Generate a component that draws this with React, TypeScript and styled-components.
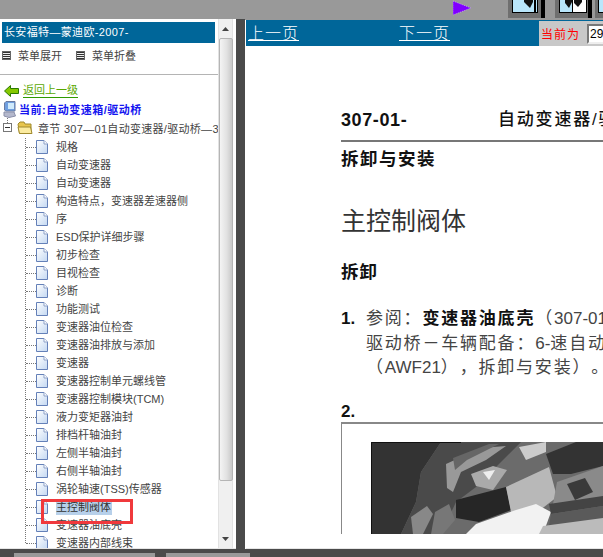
import styled, { createGlobalStyle } from "styled-components";

const GlobalStyle = createGlobalStyle`
    html, body {
        margin: 0;
        padding: 0;
        background: #999;
        overflow: hidden;
    }
    * {
        box-sizing: border-box;
    }
`;

const Page = styled.div`
    position: relative;
    width: 603px;
    height: 557px;
    display: flex;
    flex-direction: column;
    overflow: hidden;
    font-family: "Liberation Sans", "Noto Sans CJK SC", sans-serif;
`;

const TopBar = styled.div`
    height: 19px;
    flex: none;
    display: flex;
    padding-left: 453px;
    background: #999;
    overflow: hidden;
`;

const PlayMark = styled.svg`
    width: 19px;
    height: 16px;
    flex: none;
    margin-right: 36px;
`;

const ToolButton = styled.svg`
    width: 37px;
    height: 18px;
    flex: none;
    margin-right: ${props => props.$gap ?? 3}px;
`;

const Main = styled.div`
    flex: 1;
    min-height: 0;
    display: flex;
    background: #4a4a4a;
`;

const LeftPanel = styled.div`
    width: 236px;
    flex: none;
    display: flex;
    background: #fff;
    border-bottom: 1px solid #e6e6e6;
`;

const Menu = styled.div`
    width: 218px;
    flex: none;
    overflow: hidden;
    padding-top: 3px;
`;

const MenuTitle = styled.div`
    height: 21px;
    margin: 0 3px 0 2px;
    padding-left: 2px;
    background: #006699;
    color: #fff;
    font-size: 11px;
    letter-spacing: 0.35px;
    line-height: 21px;
    white-space: nowrap;
`;

const MenuTools = styled.div`
    height: 32px;
    display: flex;
    align-items: center;
    gap: 7px;
    border-bottom: 1px solid #b4b4b4;
    font-size: 11px;
    color: #444;
    padding: 0 0 7px 2px;
`;

const ToolIcon = styled.span`
    width: 9px;
    height: 9px;
    flex: none;
    border: 1px solid #666;
    background: repeating-linear-gradient(#333 0 1px, #eee 1px 2px);
    margin-left: ${props => props.$offset ?? 0}px;
`;

const BackLink = styled.div`
    display: flex;
    align-items: center;
    height: 19px;
    margin-top: 6px;
    padding-left: 4px;
    gap: 4px;
    font-size: 11px;
    color: #5aa800;
    span {
        border-bottom: 1px solid #2f9b00;
        line-height: 13px;
    }
`;

const Current = styled.div`
    display: flex;
    align-items: center;
    height: 18px;
    padding-left: 3px;
    gap: 3px;
    font-size: 11px;
    font-weight: bold;
    letter-spacing: 0.5px;
    color: #1414f0;
    white-space: nowrap;
`;

const Chapter = styled.div`
    display: flex;
    align-items: center;
    height: 20px;
    padding: 0 0 1px 3px;
    font-size: 11px;
    letter-spacing: 0.3px;
    color: #444;
    white-space: nowrap;
`;

const Collapse = styled.span`
    position: relative;
    width: 9px;
    height: 9px;
    flex: none;
    border: 1px solid #777;
    background: linear-gradient(#333, #333) center / 5px 1px no-repeat #fff;
    margin-right: 5px;
    &::before {
        content: "";
        position: absolute;
        left: 3px;
        top: -6px;
        height: 5px;
        border-left: 1px dotted #777;
    }
`;

const FolderIcon = styled.svg`
    width: 16px;
    height: 14px;
    flex: none;
    margin-right: 5px;
`;

const Tree = styled.ul`
    list-style: none;
    margin: 0 0 0 25px;
    padding: 0;
    border-left: 1px dotted #777;
    height: 405px;
`;

const Leaf = styled.li`
    display: flex;
    align-items: center;
    height: 18px;
    font-size: 11px;
    color: #444;
    white-space: nowrap;
    &::before {
        content: "";
        width: 10px;
        flex: none;
        border-top: 1px dotted #777;
    }
`;

const DocIcon = styled.svg`
    width: 12px;
    height: 14px;
    flex: none;
    margin-right: 8px;
`;

const LeafLabel = styled.span`
    background: ${props => (props.$selected ? "#b7d0ea" : "transparent")};
    color: ${props => (props.$selected ? "#333" : "inherit")};
    padding: 0 1px 0 0;
    line-height: 15px;
`;

const Scrollbar = styled.div`
    width: 15px;
    flex: none;
    display: flex;
    flex-direction: column;
    align-items: center;
    background: #f0f0f0;
    border-left: 1px solid #e2e2e2;
    border-right: 1px solid #e2e2e2;
`;

const ScrollArrow = styled.span`
    height: 19px;
    flex: none;
    display: flex;
    align-items: center;
    justify-content: center;
`;

const ScrollThumb = styled.div`
    width: 14px;
    height: 443px;
    flex: none;
    border: 1px solid #b5b5b5;
    border-radius: 2px;
    background: linear-gradient(90deg, #f4f4f4, #e2e2e2 55%, #c9c9c9);
`;

const Spacer = styled.div`
    flex: 1;
`;

const Gutter = styled.div`
    width: 9px;
    flex: none;
`;

const RightPanel = styled.div`
    flex: 1;
    min-width: 0;
    display: flex;
    flex-direction: column;
    padding: 1px 0 0 1px;
    background: linear-gradient(#999 1px, #fff 1px);
`;

const PageBar = styled.div`
    height: 26px;
    flex: none;
    display: flex;
    background: #006699;
    color: #fff;
`;

const PageLink = styled.a`
    width: ${props => props.$w}px;
    flex: none;
    padding-left: 2px;
    font-size: 16px;
    letter-spacing: 1px;
    line-height: 24px;
    text-decoration: underline;
    white-space: nowrap;
    font-family: "Noto Sans CJK SC", sans-serif;
    font-weight: 300;
`;

const PageBox = styled.div`
    width: 64px;
    flex: none;
    display: flex;
    align-items: center;
    padding-left: 2px;
    gap: 7px;
    background: #c8c8c8;
    margin-top: 1px;
    color: #f00;
    font-size: 12px;
    letter-spacing: 1px;
    white-space: nowrap;
`;

const PageInput = styled.div`
    width: 30px;
    height: 20px;
    flex: none;
    background: #fff;
    border: 2px solid;
    border-color: #777 #eee #eee #777;
    color: #000;
    font-size: 12px;
    letter-spacing: 0;
    line-height: 16px;
    padding-left: 1px;
`;

const Doc = styled.div`
    flex: 1;
    min-height: 0;
    overflow: hidden;
    background: #fff;
    padding: 65px 0 0 95px;
    color: #222;
    white-space: nowrap;
    border-bottom: 1px solid #e6e6e6;
`;

const DocHead = styled.div`
    height: 31px;
    display: flex;
    align-items: flex-start;
    border-bottom: 2px solid #777;
    line-height: 18px;
    color: #111;
`;

const DocCode = styled.span`
    width: 157px;
    flex: none;
    font-size: 18px;
    font-weight: bold;
    letter-spacing: 0.6px;
`;

const DocChapter = styled.span`
    font-size: 17px;
    font-weight: 500;
    letter-spacing: 1.8px;
`;

const SubTitle = styled.div`
    font-size: 17.5px;
    font-weight: bold;
    letter-spacing: 1.5px;
    line-height: 20px;
    margin-top: 7px;
    color: #111;
`;

const DocTitle = styled.div`
    font-size: 25px;
    line-height: 36px;
    margin-top: 34px;
    color: #333;
`;

const Section = styled.div`
    font-size: 17.5px;
    font-weight: bold;
    letter-spacing: 1px;
    line-height: 20px;
    margin-top: 23px;
    color: #111;
`;

const Step = styled.div`
    display: flex;
    margin-top: 25px;
    font-size: 17px;
    line-height: 24.5px;
`;

const StepNo = styled.span`
    width: 25px;
    flex: none;
    font-size: 17px;
    font-weight: bold;
    color: #111;
`;

const StepBody = styled.div`
    color: #444;
    letter-spacing: 1.8px;
    text-spacing-trim: space-all;
    b {
        color: #111;
    }
`;

const Latin = styled.span`
    font-size: 17px;
    letter-spacing: 0;
`;

const StepTwo = styled.div`
    margin-top: 21.5px;
    font-size: 17px;
    font-weight: bold;
    line-height: 20px;
    color: #111;
`;

const Figure = styled.div`
    height: 112px;
    border-left: 1px solid #888;
    border-top: 2px solid #888;
    padding: 18px 0 0 29px;
    overflow: hidden;
`;

const Photo = styled.svg`
    display: block;
    width: 232px;
    height: 92px;
`;

const BottomBar = styled.div`
    height: 8px;
    flex: none;
    display: flex;
    padding: 4px 0 0 14px;
    background: #4a4a4a;
`;

const BottomSeg = styled.div`
    height: 4px;
    width: ${props => props.$w}px;
    margin-right: ${props => props.$gap ?? 0}px;
    background: #999;
`;

const Callout = styled.div`
    position: absolute;
    left: 41px;
    top: 499px;
    width: 92px;
    height: 25px;
    border: 3px solid #f0393c;
`;

const items = [
    "规格",
    "自动变速器",
    "自动变速器",
    "构造特点，变速器差速器侧",
    "序",
    "ESD保护详细步骤",
    "初步检查",
    "目视检查",
    "诊断",
    "功能测试",
    "变速器油位检查",
    "变速器油排放与添加",
    "变速器",
    "变速器控制单元螺线管",
    "变速器控制模块(TCM)",
    "液力变矩器油封",
    "排档杆轴油封",
    "左侧半轴油封",
    "右侧半轴油封",
    "涡轮轴速(TSS)传感器",
    "主控制阀体",
    "变速器油底壳",
    "变速器内部线束",
];

function Doc16() {
    return (
        <DocIcon viewBox="0 0 12 14">
            <defs>
                <linearGradient id="page" x1="0" y1="0" x2="1" y2="1">
                    <stop offset="0" stopColor="#ffffff" />
                    <stop offset="1" stopColor="#c3d8f2" />
                </linearGradient>
            </defs>
            <path d="M.5.5H8L11.5 4V13.5H.5Z" fill="url(#page)" stroke="#6480b8" />
            <path d="M8 .5V4H11.5" fill="#fff" stroke="#8ea2c8" />
        </DocIcon>
    );
}

function App() {
    return (
        <Page>
            <GlobalStyle />
            <TopBar>
                <PlayMark viewBox="0 0 19 16">
                    <path d="M0 1 18 8 0 15Z" fill="#8000ff" stroke="#d9c8ff" strokeWidth=".6" strokeDasharray="1 1" />
                </PlayMark>
                <ToolButton viewBox="0 0 37 18" $gap={10}>
                    <rect width="37" height="18" fill="#6f6f6f" />
                    <rect x="4" y="0" width="26" height="13" fill="#000" />
                    <rect x="5" y="0" width="24" height="12" fill="#b9e6fb" />
                    <path d="M16 0H25V2L22 8 19 5 16 2Z" fill="#111" />
                    <rect x="26" y="0" width="2" height="12" fill="#000" />
                    <rect x="33" y="0" width="4" height="18" fill="#000" />
                </ToolButton>
                <ToolButton viewBox="0 0 37 18">
                    <rect width="37" height="18" fill="#6f6f6f" />
                    <rect x="4" y="0" width="28" height="13" fill="#000" />
                    <rect x="5" y="0" width="26" height="12" fill="#b9e6fb" />
                    <rect x="18" y="0" width="13" height="12" fill="#fff" />
                    <path d="M10 0H17V2L14 8 10 3Z" fill="#111" />
                    <path d="M19 0H27V2L23 7 19 3Z" fill="#111" />
                    <rect x="17" y="0" width="1" height="12" fill="#000" />
                    <rect x="33" y="0" width="4" height="18" fill="#000" />
                </ToolButton>
                <ToolButton viewBox="0 0 37 18">
                    <rect width="37" height="18" fill="#6f6f6f" />
                    <rect x="3" y="0" width="30" height="13" fill="#000" />
                    <rect x="4" y="0" width="28" height="12" fill="#b9e6fb" />
                </ToolButton>
            </TopBar>
            <Main>
                <LeftPanel>
                    <Menu>
                        <MenuTitle>长安福特—蒙迪欧-2007-</MenuTitle>
                        <MenuTools>
                            <ToolIcon />
                            <span>菜单展开</span>
                            <ToolIcon $offset={7} />
                            <span>菜单折叠</span>
                        </MenuTools>
                        <BackLink>
                            <svg width="15" height="12" viewBox="0 0 15 12">
                                <path d="M.5 6 6.5.5V3.5H14.5V8.5H6.5V11.5Z" fill="#86c800" stroke="#2a7a00" />
                            </svg>
                            <span>返回上一级</span>
                        </BackLink>
                        <Current>
                            <svg width="13" height="17" viewBox="0 0 13 17">
                                <path d="M3 .5H12V10H3L1.5 9V2Z" fill="#6f9fe0" stroke="#6a7aa0" />
                                <rect x="5" y="2" width="6" height="6" fill="#cfeafc" />
                                <path d="M1 11H11L12.5 15 6 16.5 1 15Z" fill="#b4b8cc" stroke="#8a8fa8" />
                            </svg>
                            <span>当前:自动变速箱/驱动桥</span>
                        </Current>
                        <Chapter>
                            <Collapse />
                            <FolderIcon viewBox="0 0 16 14">
                                <path d="M1 3 3 1H7L8 3H14V12.5H2.5Z" fill="#e8c54e" stroke="#a08a2e" />
                                <path d="M1 6H13.5L15 12.5H2.5Z" fill="#fbeba0" stroke="#a08a2e" />
                            </FolderIcon>
                            <span>章节 307—01自动变速器/驱动桥—30</span>
                        </Chapter>
                        <Tree>
                            {items.map((item, i) => (
                                <Leaf key={i}>
                                    <Doc16 />
                                    <LeafLabel $selected={item === "主控制阀体"}>{item}</LeafLabel>
                                </Leaf>
                            ))}
                        </Tree>
                    </Menu>
                    <Scrollbar>
                        <ScrollArrow>
                            <svg width="7" height="4" viewBox="0 0 7 4"><path d="M3.5 0 7 4H0Z" fill="#444" /></svg>
                        </ScrollArrow>
                        <ScrollThumb />
                        <Spacer />
                        <ScrollArrow>
                            <svg width="7" height="4" viewBox="0 0 7 4"><path d="M0 0H7L3.5 4Z" fill="#444" /></svg>
                        </ScrollArrow>
                    </Scrollbar>
                </LeftPanel>
                <Gutter />
                <RightPanel>
                    <PageBar>
                        <PageLink $w={151}>上一页</PageLink>
                        <PageLink $w={142}>下一页</PageLink>
                        <PageBox>
                            当前为
                            <PageInput>29</PageInput>
                        </PageBox>
                    </PageBar>
                    <Doc>
                        <DocHead>
                            <DocCode>307-01-</DocCode>
                            <DocChapter>自动变速器/驱动桥</DocChapter>
                        </DocHead>
                        <SubTitle>拆卸与安装</SubTitle>
                        <DocTitle>主控制阀体</DocTitle>
                        <Section>拆卸</Section>
                        <Step>
                            <StepNo>1.</StepNo>
                            <StepBody>
                                参阅：<b>变速器油底壳</b>（<Latin>307-01</Latin>
                                <br />
                                驱动桥－车辆配备：<Latin>6-</Latin>速自动变速
                                <br />
                                （<Latin>AWF21</Latin>），拆卸与安装）。
                            </StepBody>
                        </Step>
                        <StepTwo>2.</StepTwo>
                        <Figure>
                            <Photo viewBox="0 0 232 92">
                                <rect width="232" height="92" fill="#6b6b6b" />
                                <path d="M0 0H70L50 30 45 60 30 92H0Z" fill="#333" />
                                <path d="M70 0H150L120 30 105 45 85 60 70 92H30L45 60 50 30Z" fill="#4a4a4a" />
                                <path d="M75 22 110 6 135 4 115 18 90 30 82 50 76 46Z" fill="#999" />
                                <path d="M82 16 118 2 128 2 96 18 84 28Z" fill="#666" />
                                <path d="M100 32 122 24 136 28 122 48 105 44Z" fill="#aaa" />
                                <path d="M112 30 124 28 118 38Z" fill="#eee" />
                                <path d="M85 58 135 45 140 68 108 80 85 76Z" fill="#262626" />
                                <path d="M135 45 178 25 186 55 160 75 140 70Z" fill="#b8b8b8" />
                                <path d="M105 82 145 68 165 62 180 70 172 92H95Z" fill="#f2f2f2" />
                                <path d="M175 12 205 0H232V24L200 32 182 32Z" fill="#333" />
                                <path d="M186 40 232 24V58L182 62Z" fill="#8a8a8a" />
                                <path d="M196 42 214 36 222 50 204 58Z" fill="#3a3a3a" />
                                <path d="M178 62 232 54V64L180 72Z" fill="#444" />
                                <path d="M180 72 232 64V78L178 84Z" fill="#5a5a5a" />
                                <path d="M172 84 232 76V92H168Z" fill="#bbb" />
                                <path d="M40 75 56 64 62 72 52 92H42Z" fill="#888" />
                                <path d="M64 70 78 62 84 78 72 92H60Z" fill="#777" />
                                <path d="M148 5 175 0V10L155 18Z" fill="#ccc" />
                                <path d="M.5 92V.5H90" fill="none" stroke="#111" />
                            </Photo>
                        </Figure>
                    </Doc>
                </RightPanel>
            </Main>
            <BottomBar>
                <BottomSeg $w={141} $gap={11} />
                <BottomSeg $w={84} />
            </BottomBar>
            <Callout />
        </Page>
    );
}

export default App;
